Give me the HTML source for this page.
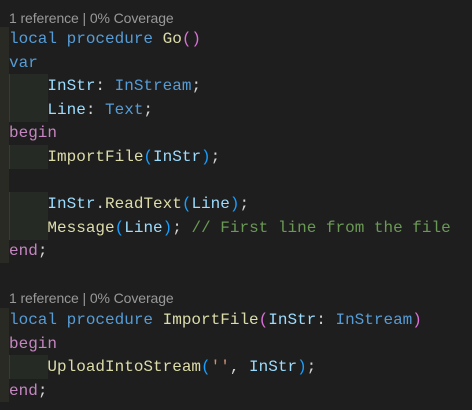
<!DOCTYPE html>
<html><head><style>
html,body{margin:0;padding:0;background:#1e1e1e;width:472px;height:410px;overflow:hidden}
.l{position:absolute;left:9px;height:24px;line-height:24px;font-family:"Liberation Mono",monospace;font-size:16px;color:#9cdcfe;white-space:pre}
.lens{position:absolute;left:9px;font-family:"Liberation Sans",sans-serif;font-size:14px;color:#999;line-height:16px;letter-spacing:-0.1px}
.k{color:#569cd6}.f{color:#dcdcaa}.m{color:#c586c0}.p{color:#da70d6}.b{color:#179fff}.c{color:#6a9955}.s{color:#ce9178}.w{color:#d4d4d4}.t{color:#569cd6}
.g{position:absolute;left:9px;width:38px;background:#252b24}
.strip{position:absolute;left:0;width:9px;background:#2a2a25}
</style></head><body>
<div class="strip" style="top:27px;height:236px"></div>
<div class="strip" style="top:308px;height:94px"></div>
<div class="g" style="top:74px;height:48px;border-left:1px solid #3a3a35"></div>
<div class="g" style="top:145px;height:24px;border-left:1px solid #3a3a35"></div>
<div class="g" style="top:192px;height:48px;border-left:1px solid #3a3a35"></div>
<div class="g" style="top:355px;height:24px;border-left:1px solid #3a3a35"></div>
<div class="lens" style="top:10px">1 reference | 0% Coverage</div>
<div class="l" style="top:27px"><span class="k">local procedure </span><span class="f">Go</span><span class="p">()</span></div>
<div class="l" style="top:50.6px"><span class="k">var</span></div>
<div class="l" style="top:74.2px">    InStr<span class="w">: </span><span class="t">InStream</span><span class="w">;</span></div>
<div class="l" style="top:97.8px">    Line<span class="w">: </span><span class="t">Text</span><span class="w">;</span></div>
<div class="l" style="top:121.4px"><span class="m">begin</span></div>
<div class="l" style="top:145px">    <span class="f">ImportFile</span><span class="b">(</span>InStr<span class="b">)</span><span class="w">;</span></div>
<div class="l" style="top:192.2px">    InStr<span class="w">.</span><span class="f">ReadText</span><span class="b">(</span>Line<span class="b">)</span><span class="w">;</span></div>
<div class="l" style="top:215.8px">    <span class="f">Message</span><span class="b">(</span>Line<span class="b">)</span><span class="w">;</span> <span class="c">// First line from the file</span></div>
<div class="l" style="top:239.4px"><span class="m">end</span><span class="w">;</span></div>
<div class="lens" style="top:290px">1 reference | 0% Coverage</div>
<div class="l" style="top:308px"><span class="k">local procedure </span><span class="f">ImportFile</span><span class="p">(</span>InStr<span class="w">: </span><span class="t">InStream</span><span class="p">)</span></div>
<div class="l" style="top:331.6px"><span class="m">begin</span></div>
<div class="l" style="top:355.2px">    <span class="f">UploadIntoStream</span><span class="b">(</span><span class="s">''</span><span class="w">, </span>InStr<span class="b">)</span><span class="w">;</span></div>
<div class="l" style="top:378.8px"><span class="m">end</span><span class="w">;</span></div>
</body></html>
